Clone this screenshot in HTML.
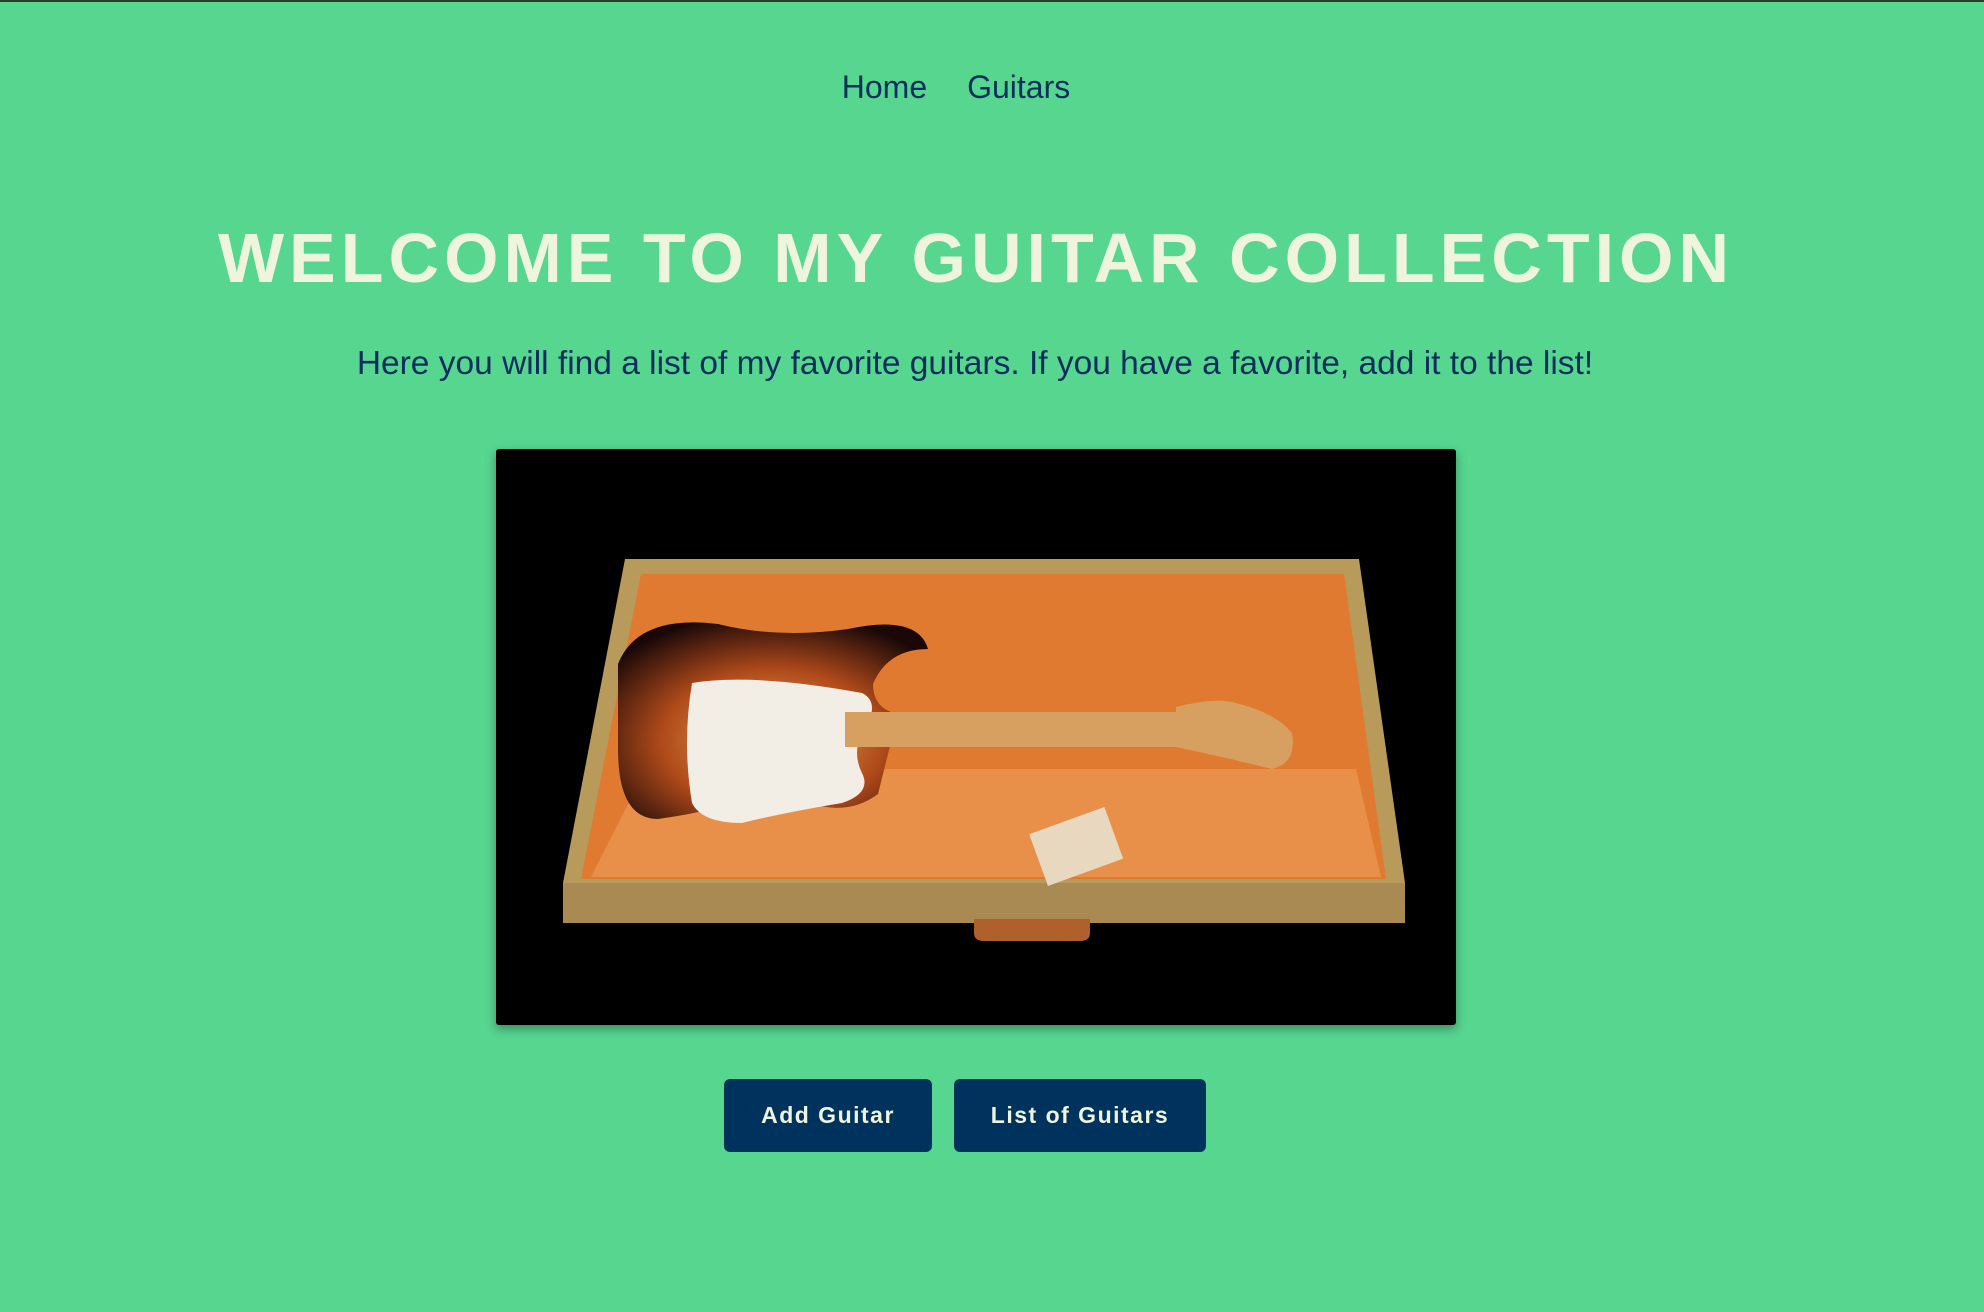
<!DOCTYPE html>
<html><head><meta charset="utf-8"><style>
html,body{margin:0;padding:0}
body{width:1984px;height:1312px;background:#57d690;border-top:2px solid #2a3a30;box-sizing:border-box;position:relative;overflow:hidden;font-family:"Liberation Sans",sans-serif}
.nav{position:absolute;top:67px;left:0;width:1912px;text-align:center;font-size:32px;color:#0a2f5c}
.nav span{margin:0 20px}
h1{position:absolute;top:216px;left:-16px;width:1984px;margin:0;text-align:center;font-size:70px;font-weight:bold;color:#eef5dc;letter-spacing:5px;line-height:80px}
.sub{position:absolute;top:343px;left:-17px;width:1984px;text-align:center;font-size:33.5px;color:#0a2f5c}
.img{position:absolute;left:496px;top:447px;width:960px;height:576px;background:#000;border-radius:3px;box-shadow:0 4px 10px rgba(0,0,0,.35);overflow:hidden}
.btn{position:absolute;top:1077px;height:73px;background:#00325e;border-radius:6px;color:#eef5dc;font-weight:bold;font-size:23px;letter-spacing:1.5px;display:flex;align-items:center;justify-content:center}
</style></head><body>
<div class="nav"><span>Home</span><span>Guitars</span></div>
<h1>WELCOME TO MY GUITAR COLLECTION</h1>
<div class="sub">Here you will find a list of my favorite guitars. If you have a favorite, add it to the list!</div>
<div class="img">
<svg width="960" height="576" viewBox="0 0 960 576">
<defs>
<radialGradient id="sb" cx="0.5" cy="0.6" r="0.65"><stop offset="0" stop-color="#e8b060"/><stop offset="0.55" stop-color="#b04a1a"/><stop offset="1" stop-color="#1a0808"/></radialGradient>
</defs>
<polygon points="129,110 863,110 909,434 67,434" fill="#b89a5a"/>
<polygon points="145,125 848,125 890,430 85,430" fill="#e07a30"/>
<polygon points="150,320 860,320 885,428 95,428" fill="#e8904a"/>
<polygon points="67,434 909,434 909,474 67,474" fill="#a88a52"/>
<path d="M478,470 h116 v14 q0,8 -10,8 h-96 q-10,0 -10,-8z" fill="#b0602a"/>
<path d="M122,215 q20,-50 100,-40 q60,15 130,5 q70,-15 80,20 q-40,0 -55,35 q0,25 25,30 l-20,80 q-40,30 -100,-5 q-50,20 -120,30 q-40,0 -40,-70z" fill="url(#sb)"/>
<path d="M196,234 q60,-10 170,10 q20,10 0,40 q-10,20 0,40 q10,20 -20,30 q-60,10 -100,20 q-40,0 -50,-20 q-10,-60 0,-120z" fill="#f2eee6"/>
<rect x="349" y="263" width="331" height="35" fill="#d8a060"/>
<path d="M680,258 q40,-10 60,-4 q40,10 56,30 q5,30 -20,36 q-40,-10 -96,-22z" fill="#d8a060"/>
<rect x="540" y="370" width="80" height="55" fill="#e8d8c0" transform="rotate(-20 580 397)"/>
</svg>
</div>
<div class="btn" style="left:724px;width:208px">Add Guitar</div>
<div class="btn" style="left:954px;width:252px">List of Guitars</div>
</body></html>
